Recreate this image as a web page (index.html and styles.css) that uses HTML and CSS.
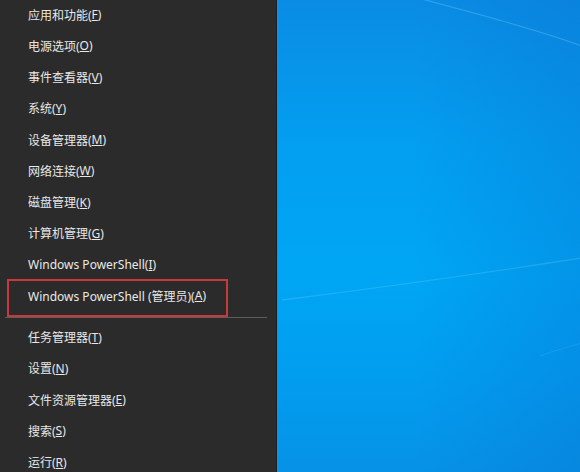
FILE: index.html
```html
<!DOCTYPE html>
<html lang="zh-CN">
<head>
<meta charset="utf-8">
<title>Win+X 菜单</title>
<link rel="stylesheet" href="styles.css">
</head>
<body>
<div class="screen">
  <nav class="menu">
    <ul class="group first">
      <li class="row">应用和功能(<u>F</u>)</li>
      <li class="row">电源选项(<u>O</u>)</li>
      <li class="row">事件查看器(<u>V</u>)</li>
      <li class="row">系统(<u>Y</u>)</li>
      <li class="row">设备管理器(<u>M</u>)</li>
      <li class="row">网络连接(<u>W</u>)</li>
      <li class="row">磁盘管理(<u>K</u>)</li>
      <li class="row">计算机管理(<u>G</u>)</li>
      <li class="row">Windows PowerShell(<u>I</u>)</li>
      <li class="row marked">Windows PowerShell (管理员)(<u>A</u>)</li>
    </ul>
    <div class="sep"></div>
    <ul class="group">
      <li class="row">任务管理器(<u>T</u>)</li>
      <li class="row">设置(<u>N</u>)</li>
      <li class="row">文件资源管理器(<u>E</u>)</li>
      <li class="row">搜索(<u>S</u>)</li>
      <li class="row">运行(<u>R</u>)</li>
    </ul>
  </nav>
  <div class="edge"></div>
  <div class="desktop">
    <svg class="streaks" width="302" height="472" viewBox="0 0 302 472" aria-hidden="true">
      <path d="M140 -2 C200 14 260 30 304 46" stroke="#8fd6ff" stroke-opacity="0.28" stroke-width="1.2" fill="none"/>
      <path d="M4 300 C100 288 200 274 304 258" stroke="#8fe0ff" stroke-opacity="0.2" stroke-width="1.4" fill="none"/>
      <path d="M262 356 C275 351 290 347 304 343" stroke="#8fd6ff" stroke-opacity="0.15" stroke-width="1" fill="none"/>
    </svg>
  </div>
</div>
</body>
</html>
```

FILE: styles.css
```css
* { box-sizing: border-box; }

html, body {
  margin: 0;
  padding: 0;
  width: 580px;
  height: 472px;
  overflow: hidden;
}

.screen {
  display: flex;
  width: 580px;
  height: 472px;
}

.menu {
  width: 276px;
  flex: 0 0 276px;
  background: #2b2b2b;
  font-family: "Noto Sans", "Noto Sans CJK SC", sans-serif;
  font-size: 12px;
  color: #e8e8e8;
  margin-top: -1px;
}

.group {
  list-style: none;
  margin: 0;
  padding: 0;
}

.row {
  height: 31.25px;
  display: flex;
  align-items: center;
  padding-left: 28px;
  white-space: nowrap;
  position: relative;
}

.row u {
  text-decoration: underline;
  text-underline-offset: 1px;
}

.row.marked::after {
  content: "";
  position: absolute;
  left: 7px;
  top: 50%;
  width: 217px;
  height: 34px;
  margin-top: -17px;
  border: 2.5px solid #c8393c;
}

.sep {
  height: 1px;
  margin: 5px 9px 4px 5px;
  background: #5c5c5c;
}

.edge {
  flex: 0 0 2px;
  background: linear-gradient(to right, #1e1e1e 0 1px, #5f7d92 1px 2px);
}

.desktop {
  flex: 1;
  position: relative;
  overflow: hidden;
  background:
    linear-gradient(to right, rgba(0, 120, 215, 0) 45%, rgba(8, 110, 205, 0.3) 100%),
    linear-gradient(to bottom, #0a8ce4 0%, #039eef 30%, #00a6f4 58%, #019ef0 78%, #0692e6 100%);
}

.streaks {
  position: absolute;
  left: 0;
  top: 0;
}
```
